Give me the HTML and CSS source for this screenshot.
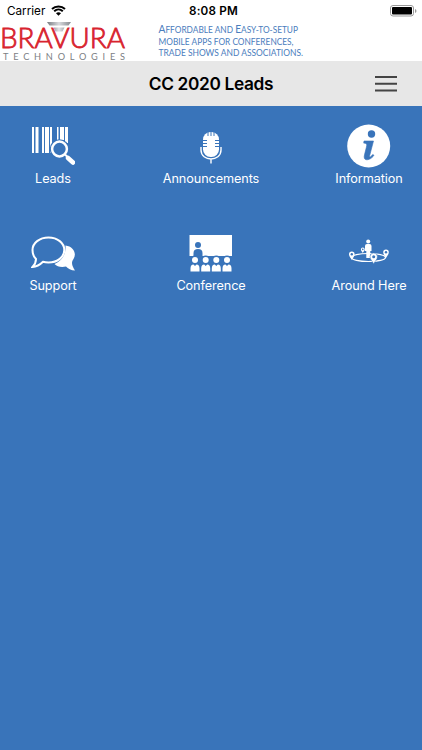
FILE: index.html
```html
<!DOCTYPE html>
<html lang="en">
<head>
<meta charset="utf-8">
<title>CC 2020 Leads</title>
<link rel="stylesheet" href="styles.css">
</head>
<body>
<div class="app">
  <header class="status">
    <div class="carrier">
      <span>Carrier</span>
      <svg width="15" height="11" viewBox="0 0 15 11"><path d="M1 4C4.500.7 10.500.7 14 4M3.200 6.300c2.500-2.300 6.100-2.300 8.600 0" fill="none" stroke="#000" stroke-width="2"/><path d="M5 8.200c1.500-1.300 3.500-1.300 5 0L7.500 10.800z"/></svg>
    </div>
    <div class="time">8:08 PM</div>
    <svg class="battery" width="27" height="12" viewBox="0 0 27 12"><rect x=".5" y=".5" width="23" height="10.500" rx="2.500" fill="#fff" stroke="#999"/><rect x="2" y="2" width="20" height="7.500" rx="1"/><path d="M25 4v4q1.500-.5 1.500-2T25 4" fill="#999"/></svg>
  </header>
  <div class="banner">
    <svg width="422" height="40" viewBox="0 21 422 40">
      <defs><linearGradient id="metal"><stop stop-color="#777b80"/><stop offset=".5" stop-color="#d8dadd"/><stop offset="1" stop-color="#858a8f"/></linearGradient></defs>
      <path d="M47 22h24l-2.500 3.500h-19z" fill="url(#metal)"/>
      <path d="M53.500 27.500h11l-2 4h-7z" fill="url(#metal)" opacity=".7"/>
      <text class="brand" x="0" y="48.300" textLength="125" lengthAdjust="spacingAndGlyphs">BRAVURA</text>
      <text class="brand-sub" x="3" y="60" textLength="122">TECHNOLOGIES</text>
      <g class="tagline">
        <text x="158.500" y="33" textLength="139.500" lengthAdjust="spacingAndGlyphs"><tspan class="cap">A</tspan>ffordable and <tspan class="cap">E</tspan>asy-to-setup</text>
        <text x="158.500" y="44.500" textLength="135" lengthAdjust="spacingAndGlyphs">mobile apps for conferences,</text>
        <text x="158.500" y="55.500" textLength="144.500" lengthAdjust="spacingAndGlyphs">trade shows and associations.</text>
      </g>
    </svg>
  </div>
  <div class="titlebar">
    <h1>CC 2020 Leads</h1>
    <svg class="menu" width="22" height="16" viewBox="0 0 22 16"><path d="M0 1h22M0 7.800h22M0 14.600h22" stroke="#444" stroke-width="2"/></svg>
  </div>
  <main class="grid">
    <div class="item">
      <svg width="44" height="44" viewBox="31 124 44 44" fill="#fff">
        <path d="M32 127h2v26h-2zM35.500 127h3v26h-3zM42 127h2v26h-2zM45 127h4v26h-4zM50 127h2v26h-2zM57 127h1.500v13H57zM60 127h4v13h-4zM65 127h3v16h-3z"/>
        <circle cx="59.500" cy="149" r="9.800" fill="#3974ba"/><circle cx="59.500" cy="149" r="7.400" fill="#3974ba" stroke="#fff" stroke-width="2.500"/>
        <path d="M65 154.500l3 3" stroke="#fff" stroke-width="2"/><path d="M68 158l5 4.500" stroke="#fff" stroke-width="4.500" stroke-linecap="round"/>
      </svg>
      <span>Leads</span>
    </div>
    <div class="item">
      <svg width="44" height="44" viewBox="189 124 44 44" fill="#fff">
        <rect x="203" y="132" width="16" height="25" rx="7.500"/>
        <path d="M208 132v4M211 131.500v4.500M214 132v4M203 140.500h4M203 143.500h4M203 146.500h4M215 140.500h4M215 143.500h4M215 146.500h4" stroke="#3974ba" fill="none"/>
        <path d="M201 147v3c0 12 20 12 20 0v-3M211 159v4.500" stroke="#fff" stroke-width="1.400" fill="none"/>
      </svg>
      <span>Announcements</span>
    </div>
    <div class="item">
      <svg width="44" height="44" viewBox="347 124 44 44">
        <circle cx="368.700" cy="146" r="21.500" fill="#fff"/><circle cx="371.500" cy="134" r="3.700" fill="#3974ba"/>
        <path d="M364 141h9.500l-3.800 14.500c-.6 2.300 1 1.800 3 -1l1.300 .8c-3 4.800-10.300 6.500-9.800 1.300.3-2.700 2.200-8.700 2.500-11 .2-1.800-.6-2.300-3-2.500z" fill="#3974ba" stroke="#3974ba" stroke-width=".6"/>
      </svg>
      <span>Information</span>
    </div>
    <div class="item">
      <svg width="44" height="44" viewBox="31 231 44 44">
        <path d="M65.500 245.500c8 1 11.500 8 8 13.500-1 1.500-1.500 2.500-1.500 4 0 2.500 1.500 5 3 7.500-4 0-7-2-9-4-5 1-9 0-11.500-2.500 7-3 11.500-8.500 11-18.500z" fill="#fff"/>
        <path d="M48.500 237.500c9 0 15.800 5.500 15.800 12.500s-6.800 12.500-15.800 12.500c-2 0-4-.2-5.500-.7-3 3-6.500 5-10.500 5.200 2.500-2.500 3.500-5 3.500-8-2.500-2.300-3.500-5-3.500-9 0-7 7-12.500 16-12.500z" fill="#3974ba" stroke="#fff" stroke-width="2"/>
      </svg>
      <span>Support</span>
    </div>
    <div class="item">
      <svg width="44" height="44" viewBox="189 231 44 44" fill="#fff">
        <path d="M189.500 235H232v21h-42.500z"/>
        <g fill="#3974ba"><circle cx="198" cy="245" r="3"/><path d="M193.500 256v-3q0-4 4.500-4t4.500 4v3z"/></g>
        <g id="seat"><circle cx="195" cy="259.500" r="4" fill="#3974ba"/><circle cx="195" cy="260" r="3"/><path d="M190.500 271.500v-3q0-4 3-4l1.500 1.500 1.500-1.500q3 0 3 4v3z"/></g>
        <use href="#seat" x="10.700"/><use href="#seat" x="21.300"/><use href="#seat" x="32"/>
      </svg>
      <span>Conference</span>
    </div>
    <div class="item">
      <svg width="44" height="44" viewBox="347 231 44 44" fill="#fff">
        <ellipse cx="368.500" cy="257.500" rx="17" ry="4" fill="none" stroke="#fff" stroke-width="1.200"/>
        <circle cx="368.200" cy="241.500" r="2"/><path d="M365 246q0-2 2-2h2.500q2 0 2 2v5h-1.200v7h-4v-7H365z"/>
        <g id="pin"><path d="M351.800 260c-1-2-2.800-3.500-2.800-5.800a2.800 2.800 0 0 1 5.600 0c0 2.300-1.800 3.800-2.800 5.800z"/><circle cx="351.800" cy="254.300" r="1.200" fill="#3974ba"/></g>
        <use href="#pin" x="34.200" y="-2"/>
        <path d="M373.700 264c-1.300-3-3.700-4.500-3.700-7.300a3.700 3.700 0 0 1 7.400 0c0 2.800-2.400 4.300-3.700 7.300z" stroke="#3974ba" stroke-width=".5"/><circle cx="373.700" cy="256.700" r="1.500" fill="#3974ba"/>
        <path d="M362.800 253c-.6-1.500-1.900-2.300-1.900-3.600a1.900 1.900 0 0 1 3.800 0c0 1.300-1.300 2.100-1.900 3.600z"/><circle cx="362.800" cy="249.400" r=".8" fill="#3974ba"/>
      </svg>
      <span>Around Here</span>
    </div>
  </main>
</div>
</body>
</html>
```
FILE: styles.css
```css
* { box-sizing: border-box; }
body { margin: 0; font-family: Inter, "Liberation Sans", sans-serif; }
svg { display: block; flex: none; }
.app { height: 750px; display: flex; flex-direction: column; background: #3974ba; overflow: hidden; }
.status { height: 21px; background: #fff; display: grid; grid-template-columns: 1fr auto 1fr; align-items: center; padding: 0 5px 0 7px; font-size: 11.700px; }
.carrier { display: flex; align-items: center; gap: 6px; }
.time { font-weight: 600; letter-spacing: .2px; padding-left: 3px; }
.battery { justify-self: end; }
.banner { height: 40px; background: #fff; }
.brand { font: 300 27px Lato, sans-serif; fill: #d8232e; stroke: #d8232e; stroke-width: .8px; }
.brand-sub { font: 9.200px Lato, sans-serif; fill: #7c8084; }
.tagline { font: 9px Lato, "Open Sans", sans-serif; text-transform: uppercase; fill: #4a7dbd; }
.cap { font-size: 11px; }
.titlebar { height: 45px; background: #e7e7e7; display: grid; grid-template-columns: 1fr auto 1fr; align-items: center; padding: 0 25px; }
.titlebar h1 { grid-column: 2; margin: 0; font-size: 17.300px; font-weight: 600; letter-spacing: -.35px; }
.menu { justify-self: end; }
.grid { display: grid; grid-template-columns: 106px 210px 106px; grid-auto-rows: 107px; padding-top: 18px; }
.item { display: flex; flex-direction: column; align-items: center; gap: 2px; color: #fff; font-size: 12.700px; line-height: 18px; letter-spacing: -.1px; white-space: nowrap; }
```
